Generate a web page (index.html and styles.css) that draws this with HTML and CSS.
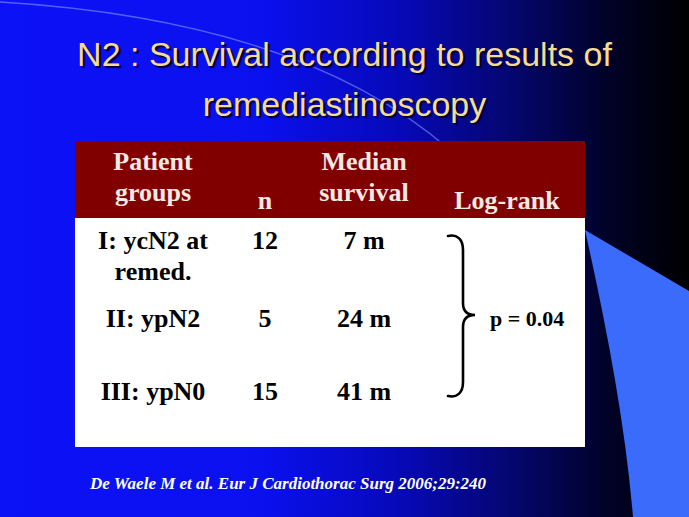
FILE: index.html
```html
<!DOCTYPE html>
<html>
<head>
<meta charset="utf-8">
<link rel="stylesheet" href="styles.css">
</head>
<body>
<div class="slide">
  <svg class="deco" width="689" height="517" viewBox="0 0 689 517" aria-hidden="true">
    <path class="arc" d="M0,2 Q300,20 450,150" />
    <path class="wedge" d="M585,230 L689,291 L689,517 L633,517 C625,420 605,320 585,230 Z" />
  </svg>

  <h1 class="title">
    <span class="title-line">N2 : Survival according to results of</span>
    <span class="title-line">remediastinoscopy</span>
  </h1>

  <div class="table">
    <div class="thead">
      <div class="th th-two">Patient<br>groups</div>
      <div class="th th-one">n</div>
      <div class="th th-two">Median<br>survival</div>
      <div class="th th-one">Log-rank</div>
    </div>
    <div class="tbody">
      <div class="td">I: ycN2 at<br>remed.</div>
      <div class="td">12</div>
      <div class="td">7 m</div>
      <div class="td-stat">
        <svg class="brace" width="32" height="167" viewBox="0 0 32 167" aria-hidden="true">
          <path d="M2,3 C11,1 17,6 17,17 L17,70 C17,78 21,82 29,82 C21,82 17,86 17,94 L17,149 C17,160 11,165 2,163" />
        </svg>
        <span class="pval">p = 0.04</span>
      </div>
      <div class="td">II: ypN2</div>
      <div class="td">5</div>
      <div class="td">24 m</div>
      <div class="td">III: ypN0</div>
      <div class="td">15</div>
      <div class="td">41 m</div>
    </div>
  </div>

  <p class="cite">De Waele M et al. Eur J Cardiothorac Surg 2006;29:240</p>
</div>
</body>
</html>
```

FILE: styles.css
```css
* { box-sizing: border-box; }

html, body {
  margin: 0;
  padding: 0;
  background: #000;
}

.slide {
  position: relative;
  width: 689px;
  height: 517px;
  overflow: hidden;
  background: linear-gradient(to right, #0c12f6 0%, #0a10ee 38%, #0709b8 58%, #040670 74%, #010228 88%, #000 100%);
  display: flex;
  flex-direction: column;
}

.deco {
  position: absolute;
  left: 0;
  top: 0;
}

.arc {
  fill: none;
  stroke: rgba(140, 160, 255, 0.55);
  stroke-width: 1.3;
}

.wedge {
  fill: #3b6bfa;
}

.title {
  position: relative;
  margin: 29px 0 0;
  font-family: "Liberation Sans", Arial, sans-serif;
  font-weight: normal;
  font-size: 34px;
  line-height: 50px;
  color: #f5dc94;
  text-shadow: 2px 2px 1px #000030;
  text-align: center;
  display: flex;
  flex-direction: column;
  align-items: center;
}

.title-line {
  display: block;
  white-space: nowrap;
}

.table {
  position: relative;
  margin: 12px 0 0 75px;
  width: 510px;
  font-family: "Liberation Serif", "Times New Roman", serif;
  font-weight: bold;
  font-size: 26px;
  line-height: 31px;
}

.thead {
  display: grid;
  grid-template-columns: 156px 68px 130px 156px;
  height: 77px;
  background: #800000;
  color: #f4e8e4;
}

.th {
  display: flex;
  flex-direction: column;
  justify-content: flex-end;
  text-align: center;
  white-space: nowrap;
}

.th-two { padding-bottom: 10px; }
.th-one { padding-bottom: 2px; }

.tbody {
  display: grid;
  grid-template-columns: 156px 68px 130px 156px;
  grid-template-rows: 78px 73px 78px;
  background: #fff;
  color: #000;
}

.td {
  padding-top: 7px;
  text-align: center;
  white-space: nowrap;
}

.td-stat {
  grid-column: 4;
  grid-row: 1 / span 3;
  display: flex;
  align-items: center;
  align-self: start;
  margin-top: 15px;
  padding-left: 17px;
}

.brace {
  display: block;
  flex: none;
}

.brace path {
  fill: none;
  stroke: #000;
  stroke-width: 2.6;
  stroke-linecap: round;
}

.pval {
  margin-left: 12px;
  font-size: 22px;
  line-height: 24px;
  padding-top: 5px;
  white-space: nowrap;
}

.cite {
  position: relative;
  margin: 27px 0 0 90px;
  font-family: "Liberation Serif", "Times New Roman", serif;
  font-style: italic;
  font-weight: bold;
  font-size: 17px;
  line-height: 20px;
  color: #fff;
  white-space: nowrap;
}
```
